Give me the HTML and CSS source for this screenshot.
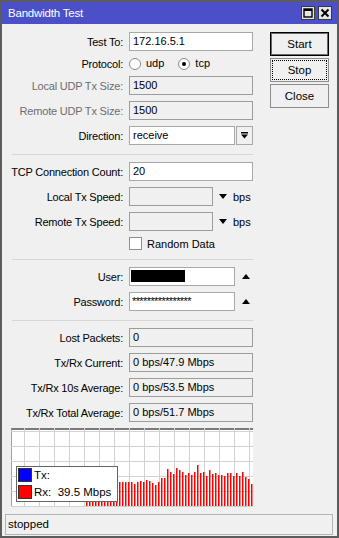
FILE: index.html
```html
<!DOCTYPE html>
<html lang="en">
<head>
    <meta charset="UTF-8">
    <title>Bandwidth Test</title>
    <link rel="stylesheet" href="styles.css">
</head>
<body>
<div class="window">
    <div class="titlebar">
        <span class="title">Bandwidth Test</span>
        <div class="title-buttons">
            <span class="tb-button">
                <svg width="10" height="10" viewBox="0 0 10 10"><rect x="1" y="1" width="8" height="8" fill="none" stroke="#000" stroke-width="1.4"/><rect x="1" y="1" width="8" height="2" fill="#000"/></svg>
            </span>
            <span class="tb-button">
                <svg width="10" height="10" viewBox="0 0 10 10"><path d="M1.5 1.5 L8.5 8.5 M8.5 1.5 L1.5 8.5" stroke="#000" stroke-width="2"/></svg>
            </span>
        </div>
    </div>

    <div class="content">
        <div class="form">
            <div class="row">
                <label>Test To:</label>
                <div class="field"><span class="input">172.16.5.1</span></div>
            </div>
            <div class="row row-small">
                <label>Protocol:</label>
                <div class="field radios">
                    <span class="radio"></span><span class="opt-udp">udp</span>
                    <span class="radio checked"></span><span>tcp</span>
                </div>
            </div>
            <div class="row">
                <label class="muted">Local UDP Tx Size:</label>
                <div class="field"><span class="input disabled">1500</span></div>
            </div>
            <div class="row">
                <label class="muted">Remote UDP Tx Size:</label>
                <div class="field"><span class="input disabled">1500</span></div>
            </div>
            <div class="row">
                <label>Direction:</label>
                <div class="field">
                    <span class="input short">receive</span>
                    <span class="drop-button">
                        <svg width="7" height="7" viewBox="0 0 7 7"><rect x="0" y="0" width="7" height="1.5" fill="#000"/><polygon points="0,2.5 7,2.5 3.5,6.5" fill="#000"/></svg>
                    </span>
                </div>
            </div>

            <div class="sep"></div>

            <div class="row">
                <label>TCP Connection Count:</label>
                <div class="field"><span class="input">20</span></div>
            </div>
            <div class="row">
                <label>Local Tx Speed:</label>
                <div class="field">
                    <span class="input disabled speed"></span>
                    <span class="tri-down"></span>
                    <span class="unit">bps</span>
                </div>
            </div>
            <div class="row">
                <label>Remote Tx Speed:</label>
                <div class="field">
                    <span class="input disabled speed"></span>
                    <span class="tri-down"></span>
                    <span class="unit">bps</span>
                </div>
            </div>
            <div class="row row-small">
                <label></label>
                <div class="field check-field">
                    <span class="checkbox"></span><span>Random Data</span>
                </div>
            </div>

            <div class="sep"></div>

            <div class="row">
                <label>User:</label>
                <div class="field">
                    <span class="input short"><span class="redacted"></span></span>
                    <span class="tri-up"></span>
                </div>
            </div>
            <div class="row">
                <label>Password:</label>
                <div class="field">
                    <span class="input short stars">****************</span>
                    <span class="tri-up"></span>
                </div>
            </div>

            <div class="sep"></div>

            <div class="row">
                <label>Lost Packets:</label>
                <div class="field"><span class="input disabled">0</span></div>
            </div>
            <div class="row">
                <label>Tx/Rx Current:</label>
                <div class="field"><span class="input disabled">0 bps/47.9 Mbps</span></div>
            </div>
            <div class="row">
                <label>Tx/Rx 10s Average:</label>
                <div class="field"><span class="input disabled">0 bps/53.5 Mbps</span></div>
            </div>
            <div class="row">
                <label>Tx/Rx Total Average:</label>
                <div class="field"><span class="input disabled">0 bps/51.7 Mbps</span></div>
            </div>

            <div class="graph">
                <svg id="chart" width="242" height="79" viewBox="0 0 242 79"></svg>
                <div class="legend">
                    <div class="legend-row"><span class="swatch tx"></span><span>Tx:</span></div>
                    <div class="legend-row"><span class="swatch rx"></span><span>Rx:&nbsp;&nbsp;39.5 Mbps</span></div>
                </div>
            </div>
        </div>

        <div class="buttons">
            <button class="btn btn-default">Start</button>
            <button class="btn btn-focus">Stop</button>
            <button class="btn">Close</button>
        </div>
    </div>

    <div class="status">stopped</div>
</div>

<script>
    var chart = document.getElementById("chart");
    var ns = "http://www.w3.org/2000/svg";

    // rx samples, top of each bar in window pixels
    var barTops = [484, 483, 485, 483, 484, 483, 484, 485, 483, 484, 483,
        483, 483, 483, 483, 483, 485, 483, 482, 483, 481, 482, 484, 486, 483,
        479, 479, 470, 473, 475, 469, 471, 473, 476, 474, 476, 473, 466, 474,
        473, 477, 471, 475, 474, 476, 476, 477, 474, 474, 477, 474, 477, 473,
        478, 480, 485];

    function add(tag, attrs) {
        var el = document.createElementNS(ns, tag);
        for (var k in attrs) {
            el.setAttribute(k, attrs[k]);
        }
        chart.appendChild(el);
    }

    // grid
    for (var gx = 13; gx < 242; gx += 15) {
        add("rect", { x: gx, y: 0, width: 1, height: 79, fill: "#d2d2d2" });
    }
    for (var gy = 3; gy < 79; gy += 15) {
        add("rect", { x: 0, y: gy, width: 242, height: 1, fill: "#d2d2d2" });
    }

    // bars
    for (var i = 0; i < barTops.length; i++) {
        var barY = barTops[i] - 429;
        add("rect", { x: 75 + i * 3, y: barY, width: 1.5, height: 78 - barY, fill: "#ff0000" });
    }
</script>
</body>
</html>
```

FILE: styles.css
```css
* {
    box-sizing: border-box;
}

body {
    margin: 0;
    font-family: "Liberation Sans", Arial, sans-serif;
    font-size: 11px;
    color: #000;
}

.window {
    width: 339px;
    height: 538px;
    border: 2px solid #5c5c5c;
    background-color: #f0f0f0;
    display: flex;
    flex-direction: column;
}

.titlebar {
    height: 22px;
    background-color: #4b50c8;
    display: flex;
    align-items: center;
    justify-content: space-between;
    padding: 0 5px 0 6px;
}

.title {
    color: #fff;
    font-size: 11.5px;
    letter-spacing: -0.2px;
}

.title-buttons {
    display: flex;
    gap: 3px;
}

.tb-button {
    width: 14px;
    height: 14px;
    background-color: #e6e6e6;
    border: 1px solid #3a3a3a;
    display: flex;
    align-items: center;
    justify-content: center;
}

.content {
    display: flex;
    padding: 8px 0 0 4px;
}

.form {
    width: 247px;
    display: flex;
    flex-direction: column;
    gap: 6px;
}

.row {
    display: grid;
    grid-template-columns: 117px auto;
    column-gap: 6px;
    align-items: center;
    height: 19px;
}

.row-small {
    height: 13px;
}

.row label {
    text-align: right;
    white-space: nowrap;
    letter-spacing: -0.2px;
}

.row label.muted {
    color: #6d6d6d;
}

.field {
    display: flex;
    align-items: center;
}

.input {
    display: block;
    width: 124px;
    height: 19px;
    line-height: 17px;
    padding: 0 3px;
    background-color: #fff;
    border: 1px solid #a8a8a8;
    white-space: nowrap;
    overflow: hidden;
}

.input.disabled {
    background-color: #f0f0f0;
    border-color: #9c9c9c;
}

.input.short {
    width: 106px;
}

.input.speed {
    width: 84px;
}

.drop-button {
    width: 17px;
    height: 19px;
    margin-left: 1px;
    border: 1px solid #a8a8a8;
    background-color: #f0f0f0;
    display: flex;
    align-items: center;
    justify-content: center;
}

.tri-down {
    width: 0;
    height: 0;
    margin-left: 6px;
    border-left: 4.5px solid transparent;
    border-right: 4.5px solid transparent;
    border-top: 5px solid #000;
}

.tri-up {
    width: 0;
    height: 0;
    margin-left: 7px;
    border-left: 4px solid transparent;
    border-right: 4px solid transparent;
    border-bottom: 5px solid #000;
}

.unit {
    margin-left: 6px;
}

.radios span {
    line-height: 13px;
}

.radio {
    width: 12px;
    height: 12px;
    border: 1px solid #8a8a8a;
    border-radius: 50%;
    background-color: #fff;
    margin-right: 5px;
    display: flex;
    align-items: center;
    justify-content: center;
}

.radio.checked::after {
    content: "";
    width: 4px;
    height: 4px;
    border-radius: 50%;
    background-color: #000;
}

.opt-udp {
    margin-right: 14px;
}

.checkbox {
    width: 13px;
    height: 13px;
    border: 1px solid #8f8f8f;
    background-color: #fff;
    margin-right: 5px;
}

.redacted {
    display: inline-block;
    width: 54px;
    height: 12px;
    background-color: #000;
    margin-left: -2px;
    vertical-align: -2px;
}

.stars {
    letter-spacing: -0.6px;
    padding-left: 2px;
}

.sep {
    height: 1px;
    width: 241px;
    margin: 3px 0 1px 6px;
    background-color: #d6d6d6;
}

.graph {
    position: relative;
    width: 242px;
    height: 79px;
    margin-left: 5px;
    background-color: #fff;
    border-top: 2px solid #7a7a7a;
    border-left: 1px solid #a0a0a0;
}

.graph svg {
    display: block;
    position: absolute;
    top: -2px;
    left: -1px;
}

.legend {
    position: absolute;
    left: 4px;
    top: 36px;
    width: 102px;
    height: 36px;
    background-color: #fff;
    border: 1px solid #646464;
    padding: 1px 0 0 1px;
    display: flex;
    flex-direction: column;
    gap: 3px;
}

.legend-row {
    display: flex;
    align-items: center;
    gap: 2px;
    font-size: 11.5px;
}

.swatch {
    width: 14px;
    height: 14px;
    border: 1px solid #333;
}

.swatch.tx {
    background-color: #0000ff;
}

.swatch.rx {
    background-color: #ff0000;
}

.buttons {
    width: 59px;
    margin-left: 17px;
    display: flex;
    flex-direction: column;
    gap: 2px;
}

.btn {
    position: relative;
    height: 24px;
    padding: 0;
    font-family: "Liberation Sans", Arial, sans-serif;
    font-size: 11.5px;
    color: #000;
    background-color: #f0f0f0;
    border: 1px solid #8c8c8c;
}

.btn-default {
    border-color: #000;
    box-shadow: inset 0 0 0 1px #6a6a6a;
}

.btn-focus::after {
    content: "";
    position: absolute;
    top: 1px;
    left: 1px;
    right: 1px;
    bottom: 1px;
    border: 1px dotted #000;
}

.status {
    height: 21px;
    margin: auto 4px 1px 3px;
    border: 1px solid #b4b4b4;
    padding: 0 0 0 2px;
    line-height: 19px;
    font-size: 11.5px;
}
```
